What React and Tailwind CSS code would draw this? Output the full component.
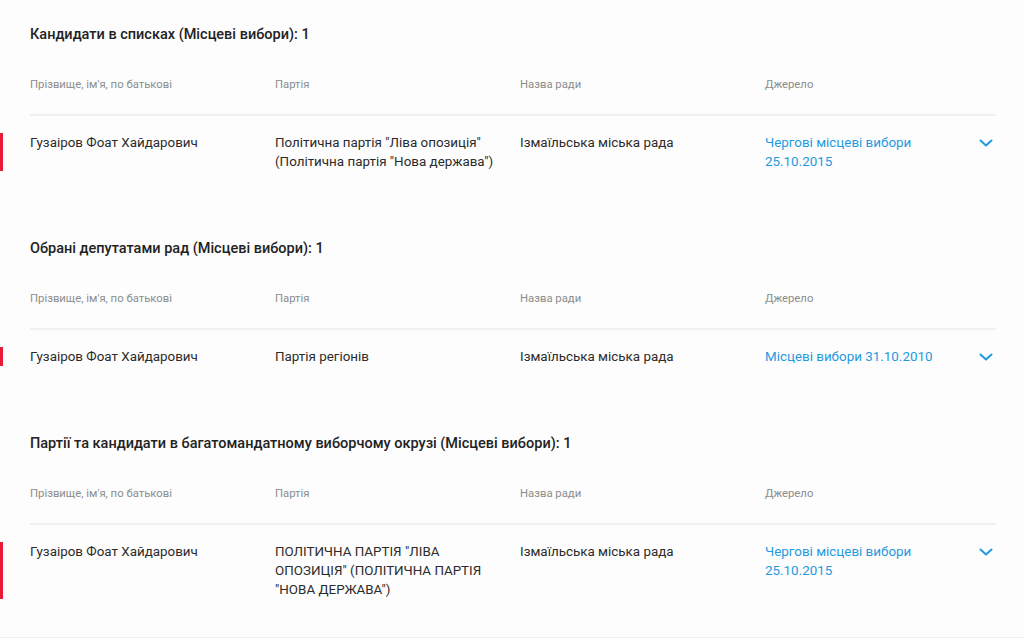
import React from 'react';

const sections = [
  {
    title: 'Кандидати в списках (Місцеві вибори): 1',
    rows: [
      {
        name: 'Гузаіров Фоат Хайдарович',
        party: 'Політична партія "Ліва опозиція" (Політична партія "Нова держава")',
        council: 'Ізмаїльська міська рада',
        source: 'Чергові місцеві вибори 25.10.2015',
      },
    ],
  },
  {
    title: 'Обрані депутатами рад (Місцеві вибори): 1',
    rows: [
      {
        name: 'Гузаіров Фоат Хайдарович',
        party: 'Партія регіонів',
        council: 'Ізмаїльська міська рада',
        source: 'Місцеві вибори 31.10.2010',
      },
    ],
  },
  {
    title: 'Партії та кандидати в багатомандатному виборчому окрузі (Місцеві вибори): 1',
    rows: [
      {
        name: 'Гузаіров Фоат Хайдарович',
        party: 'ПОЛІТИЧНА ПАРТІЯ "ЛІВА ОПОЗИЦІЯ" (ПОЛІТИЧНА ПАРТІЯ "НОВА ДЕРЖАВА")',
        council: 'Ізмаїльська міська рада',
        source: 'Чергові місцеві вибори 25.10.2015',
      },
    ],
  },
];

const Chevron = () => (
  <svg className="w-[14px] h-[8px] mt-[6px]" viewBox="0 0 14 8" fill="none">
    <path d="M1.5 1.5L7 6.5L12.5 1.5" stroke="#1f9ae0" strokeWidth="2" strokeLinecap="round" strokeLinejoin="round" />
  </svg>
);

function Section({ section, first }) {
  return (
    <section className={first ? 'pt-[25px]' : 'pt-[30px]'}>
      <h2 className="text-[14.5px] leading-5 font-medium text-[#222]">{section.title}</h2>

      {/* шапка таблиці */}
      <div className="grid grid-cols-[245px_245px_245px_1fr] mt-[32px] pb-[21px] border-b-2 border-[#eff0f4] text-[11.3px] leading-4 text-[#8c8c8c]">
        <div>Прізвище, ім'я, по батькові</div>
        <div>Партія</div>
        <div>Назва ради</div>
        <div>Джерело</div>
      </div>

      {section.rows.map((row, i) => (
        <div
          key={i}
          className="relative grid grid-cols-[245px_245px_245px_1fr] pt-[17px] pb-[38px] text-[13.4px] leading-[19px] text-[#2b2b2b]"
        >
          <span className="absolute left-[-30px] top-[17px] bottom-[38px] w-[3px] bg-[#e81c36]" />
          <div className="pr-4">{row.name}</div>
          <div className="pr-4">{row.party}</div>
          <div className="pr-4">{row.council}</div>
          <div className="flex justify-between pr-[3px]">
            <a href="#" className="text-[#1f9ae0] max-w-[190px]">{row.source}</a>
            <Chevron />
          </div>
        </div>
      ))}
    </section>
  );
}

export default function App() {
  return (
    <div className="min-h-[640px] bg-[#fdfdfd]" style={{ fontFamily: 'Roboto, "Noto Sans", sans-serif' }}>
      <div className="border-b border-[#f0f0f0]">
        <div className="pl-[30px] pr-[28px]">
          {sections.map((s, i) => (
            <Section key={i} section={s} first={i === 0} />
          ))}
        </div>
      </div>
    </div>
  );
}
